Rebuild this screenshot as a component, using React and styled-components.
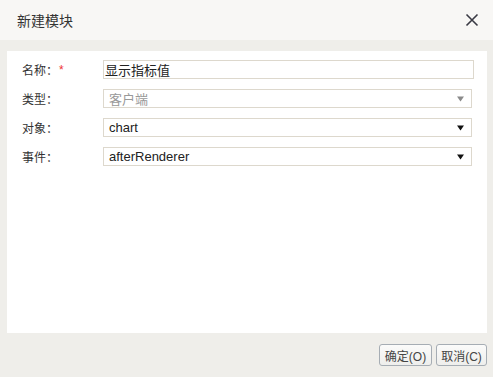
import React from "react";
import styled, { createGlobalStyle } from "styled-components";

const Global = createGlobalStyle`
  html, body { margin: 0; padding: 0; }
  body { font-family: "Liberation Sans", "Noto Sans CJK SC", sans-serif; }
`;

const Dialog = styled.div`
  width: 493px;
  height: 377px;
  background: #efeeea;
  display: flex;
  flex-direction: column;
  box-sizing: border-box;
`;

const Header = styled.div`
  height: 40px;
  background: #f8f7f5;
  display: flex;
  align-items: center;
  justify-content: space-between;
  padding: 0 14px 0 17px;
  box-sizing: border-box;
`;

const Title = styled.div`
  font-size: 14px;
  color: #333;
`;

const Close = styled.button`
  border: none;
  background: none;
  padding: 0;
  width: 14px;
  height: 14px;
  display: flex;
  cursor: pointer;
`;

const BodyWrap = styled.div`
  padding: 11px 6px 0 7px;
`;

const Panel = styled.div`
  background: #fff;
  height: 282px;
  box-sizing: border-box;
  padding: 9px 0 0 15px;
  display: flex;
  flex-direction: column;
  gap: 10px;
`;

const Row = styled.div`
  display: grid;
  grid-template-columns: 81px 1fr;
  align-items: center;
  height: 19px;
  padding-right: ${(p) => p.$right}px;
`;

const Label = styled.div`
  font-size: 12px;
  color: #333;
  display: flex;
  align-items: center;
`;

const Star = styled.span`
  color: #e33;
  font-size: 12px;
  margin-left: 1px;
`;

const Field = styled.div`
  height: 19px;
  box-sizing: border-box;
  border: 1px solid #ddd8cd;
  background: #fff;
  font-size: 13px;
  color: ${(p) => (p.$disabled ? "#999" : "#222")};
  display: flex;
  align-items: center;
  justify-content: space-between;
  padding: 0 7px 0 ${(p) => p.$pad}px;
  white-space: nowrap;
`;

const Footer = styled.div`
  display: flex;
  justify-content: flex-end;
  gap: 4px;
  padding: 11px 6px 0 0;
`;

const Button = styled.button`
  height: 22px;
  box-sizing: border-box;
  border: 1px solid #a6adb4;
  border-radius: 3px;
  background: linear-gradient(#fbfbfa, #eeeeec);
  font-family: "Liberation Sans", "Noto Sans CJK SC", sans-serif;
  font-size: 12px;
  color: #444;
  padding: 0 3px;
  width: ${(p) => p.$w}px;
`;

const Arrow = ({ color }) => (
  <svg width="7" height="6" viewBox="0 0 7 6">
    <path d="M0 0.5 H7 L3.5 5.5 Z" fill={color} />
  </svg>
);

const rows = [
  { label: "名称：", star: true, value: "显示指标值", input: true },
  { label: "类型：", value: "客户端", disabled: true },
  { label: "对象：", value: "chart" },
  { label: "事件：", value: "afterRenderer" },
];

export default function App() {
  return (
    <>
      <Global />
      <Dialog>
        <Header>
          <Title>新建模块</Title>
          <Close aria-label="close">
            <svg width="14" height="14" viewBox="0 0 14 14">
              <path d="M1.5 1.5 L12.5 12.5 M12.5 1.5 L1.5 12.5" stroke="#3a3a44" strokeWidth="1.6" />
            </svg>
          </Close>
        </Header>
        <BodyWrap>
          <Panel>
            {rows.map((r) => (
              <Row key={r.label} $right={r.input ? 13 : 15}>
                <Label>
                  {r.label}
                  {r.star && <Star>*</Star>}
                </Label>
                <Field $disabled={r.disabled} $pad={r.input ? 1 : 5}>
                  <span>{r.value}</span>
                  {!r.input && <Arrow color={r.disabled ? "#8a8a8a" : "#111"} />}
                </Field>
              </Row>
            ))}
          </Panel>
        </BodyWrap>
        <Footer>
          <Button $w={53}>确定(O)</Button>
          <Button $w={51}>取消(C)</Button>
        </Footer>
      </Dialog>
    </>
  );
}
